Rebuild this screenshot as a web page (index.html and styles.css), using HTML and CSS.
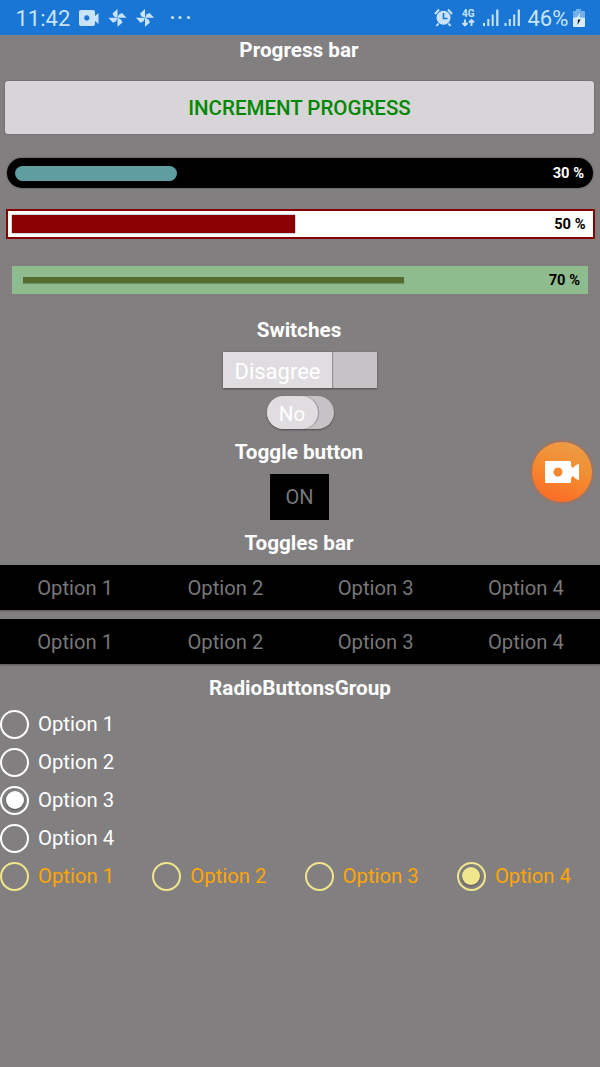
FILE: index.html
```html
<!DOCTYPE html>
<html lang="en">
<head>
<meta charset="utf-8">
<title>Widgets</title>
<link rel="stylesheet" href="styles.css">
</head>
<body>
<header class="status">
  <span class="time">11:42</span>
  <svg class="status-left" width="116" height="24" viewBox="0 0 116 24" fill="#c9e3fb">
    <path fill-rule="evenodd" d="M4 4h12q2 0 2 2v4l3.500-3v11L18 15v3q0 2-2 2H4q-2 0-2-2V6q0-2 2-2zM9.800 9.300a2.700 2.700 0 1 0 .01 0z"/>
    <g id="pinwheel"><path d="M40.500 11.800V3L35.500 7.500l1.500 3z"/><path d="M40.500 11.800h9L45 7l-3 1.500z"/><path d="M40.500 11.800v9L45.500 16.500l-1.500-3z"/><path d="M40.500 11.800h-9L36 16.800l3-1.500z"/></g>
    <use href="#pinwheel" x="27.500"/>
    <circle cx="95.500" cy="11.500" r="1.600"/><circle cx="103" cy="11.500" r="1.600"/><circle cx="111.500" cy="11.500" r="1.600"/>
  </svg>
  <svg class="status-right" width="91" height="24" viewBox="0 0 91 24" fill="#c9e3fb">
    <circle cx="11.500" cy="11.800" r="7"/>
    <path d="M3 8l4-4.500M20 8l-4-4.500M6.500 17.500l-2 2.500M16.500 17.500l2 2.500" stroke="#c9e3fb" stroke-width="2"/>
    <path d="M11.500 7v5.500h4" fill="none" stroke="#1976d5" stroke-width="1.600"/>
    <text class="network" x="30" y="10.500">4G</text>
    <path d="M33 13.500v6M30.500 17L33 19.500l2.500-2.500M39.500 20v-6M37 16.500l2.500-2.500 2.500 2.500" fill="none" stroke="#c9e3fb" stroke-width="1.900"/>
    <g id="signal"><path d="M51 17h2v3h-2zM55.300 13h2v7h-2zM59.700 8.500h2V20h-2zM64.200 3.500h2.200V20h-2.200z"/></g>
    <use href="#signal" x="21.500"/>
  </svg>
  <span class="percent">46%</span>
  <svg class="battery" width="14" height="20" viewBox="0 0 14 20">
    <path d="M4 1h5v2h3q1 0 1 1v7H1V4q0-1 1-1h2z" fill="#72b0ea"/>
    <path d="M1 10l4-1 8 1v8q0 1-1 1H2q-1 0-1-1z" fill="#d8ecfd"/>
    <path d="M8 5L3.500 11.500H6L5 17l5-7H7.500z" fill="#d8ecfd"/>
    <path d="M6 11.500h2.500L5.500 17z" fill="#111"/>
  </svg>
</header>
<main class="page">
  <h2 class="title">Progress bar</h2>
  <button class="increment">INCREMENT PROGRESS</button>
  <div class="progress progress-round"><div class="fill"></div><span class="value">30 %</span></div>
  <div class="progress progress-framed"><div class="fill"></div><span class="value">50 %</span></div>
  <div class="progress progress-thin"><div class="fill"></div><span class="value">70 %</span></div>
  <h2 class="title title-switches">Switches</h2>
  <div class="switch"><span class="thumb">Disagree</span></div>
  <div class="switch switch-round"><span class="thumb">No</span></div>
  <h2 class="title title-toggle">Toggle button</h2>
  <button class="toggle">ON</button>
  <h2 class="title title-bars">Toggles bar</h2>
  <div class="bar"><span>Option 1</span><span>Option 2</span><span>Option 3</span><span>Option 4</span></div>
  <div class="bar"><span>Option 1</span><span>Option 2</span><span>Option 3</span><span>Option 4</span></div>
  <h2 class="title title-radios">RadioButtonsGroup</h2>
  <div class="radios">
    <div class="radio"><i class="ring"></i>Option 1</div>
    <div class="radio"><i class="ring"></i>Option 2</div>
    <div class="radio"><i class="ring checked"></i>Option 3</div>
    <div class="radio"><i class="ring"></i>Option 4</div>
  </div>
  <div class="radios radios-row">
    <div class="radio"><i class="ring"></i>Option 1</div>
    <div class="radio"><i class="ring"></i>Option 2</div>
    <div class="radio"><i class="ring"></i>Option 3</div>
    <div class="radio"><i class="ring checked"></i>Option 4</div>
  </div>
</main>
<div class="recorder">
  <svg width="34" height="24" viewBox="0 0 34 24"><path fill="#fff" fill-rule="evenodd" d="M1 1h24q1 0 1 1v4l2 2 3-3 3-1v16l-3-1-3-3-2 2v4q0 1-1 1H1q-1 0-1-1V2q0-1 1-1zM13 7.500a4.500 4.500 0 1 0 .01 0z"/></svg>
</div>
</body>
</html>
```
FILE: styles.css
```css
* { box-sizing: border-box; }
body {
  margin: 0;
  height: 1067px;
  overflow: hidden;
  background: #827f81;
  color: #fff;
  font: 20.5px/24px Roboto, sans-serif;
}
.status {
  display: flex;
  height: 35px;
  padding: 6px 14px 0 15.5px;
  background: #1976d5;
  color: #c9e3fb;
  font-size: 22px;
}
.time { width: 61px; line-height: 26px; }
.status-left { flex: none; }
.status-right { flex: none; margin-left: 239px; }
.percent { flex: 1; padding-left: 5px; line-height: 26px; white-space: nowrap; }
.battery { flex: none; margin-top: 2px; }
.network { font: 700 10px Roboto, sans-serif; }
.page { display: flex; flex-direction: column; align-items: center; }
.title {
  height: 24px;
  margin: 3px 0 0 -2px;
  font-size: 20.7px;
  font-weight: 700;
  line-height: 24px;
}
.increment {
  width: 589px;
  height: 53px;
  margin: 19px 0 0 -1px;
  padding: 0;
  border: 0;
  border-radius: 3px;
  background: #d7d5d7;
  box-shadow: 0 0 2px rgba(0, 0, 0, .35);
  color: #008800;
  font: 500 20.5px/54px Roboto, sans-serif;
}
.progress {
  display: flex;
  align-items: center;
  justify-content: space-between;
  font-size: 14.7px;
  font-weight: 700;
}
.progress-round {
  width: 586px;
  height: 30px;
  margin: 24px 0 0;
  padding: 0 9px 0 8px;
  border-radius: 15px;
  background: #000;
  box-shadow: 0 0 2px rgba(0, 0, 0, .5);
}
.progress-round .fill { width: 162px; height: 15px; border-radius: 8px; background: #5f9ea0; }
.progress-framed {
  width: 589px;
  height: 30px;
  margin: 21px 0 0;
  padding: 0 7px 0 4px;
  border: 2px solid #870000;
  background: #fff;
  color: #000;
}
.progress-framed .fill { width: 283px; height: 18px; background: #8b0000; box-shadow: 0 0 1px #000; }
.progress-thin {
  width: 576px;
  height: 28px;
  margin-top: 27px;
  padding: 0 8px 0 11px;
  background: #8fbc8f;
  color: #000;
}
.progress-thin .fill { width: 381px; height: 6px; background: #556b2f; box-shadow: 0 1px 1px rgba(60, 90, 40, .4); }
.title-switches { margin-top: 24px; }
.switch {
  display: flex;
  width: 154px;
  height: 36px;
  margin-top: 10px;
  background: #c5c3c5;
  box-shadow: 0 1px 2px rgba(0, 0, 0, .4);
  font-size: 22px;
}
.thumb {
  width: 109px;
  background: #dfdde0;
  box-shadow: 1px 0 1px rgba(0, 0, 0, .25);
  line-height: 39px;
  text-align: center;
}
.switch-round { width: 67px; height: 33px; margin-top: 8px; border-radius: 17px; font-size: 20.5px; }
.switch-round .thumb { width: 51px; border-radius: 17px; line-height: 36px; }
.title-toggle { margin-top: 11px; }
.toggle {
  width: 59px;
  height: 46px;
  margin: 10px 0 0 -1px;
  padding: 0;
  border: 0;
  background: #000;
  color: #777;
  font: 20px/46px Roboto, sans-serif;
}
.title-bars { margin-top: 11px; }
.bar {
  display: grid;
  grid-template-columns: repeat(4, 1fr);
  width: 602px;
  height: 45px;
  margin: 10px 0 0;
  padding-left: 1px;
  background: #000;
  box-shadow: 0 1px 2px rgba(0, 0, 0, .35);
  color: #777;
  font-size: 20.2px;
  line-height: 46px;
  text-align: center;
}
.bar + .bar { margin-top: 8.5px; }
.title-radios { margin: 12.5px 0 0; }
.radios { width: 600px; margin-top: 5px; }
.radio { display: flex; align-items: center; height: 38px; font-size: 20.3px; }
.ring {
  display: grid;
  place-items: center;
  width: 29px;
  height: 29px;
  margin-right: 9px;
  border: 2px solid currentColor;
  border-radius: 50%;
}
.checked::after {
  content: "";
  width: 18px;
  height: 18px;
  border-radius: 50%;
  background: currentColor;
  box-shadow: 0 1px 2px rgba(0, 0, 0, .4);
}
.radios-row { display: flex; margin-top: 0; color: #ffa500; }
.radios-row .radio { flex: 0 0 152.3px; }
.radios-row .ring { color: #f0e68c; }
.recorder {
  position: absolute;
  left: 532px;
  top: 442px;
  display: grid;
  place-items: center;
  width: 60px;
  height: 60px;
  border-radius: 50%;
  background: linear-gradient(20deg, #fb6424, #f58a30 50%, #e9a04a);
  box-shadow: 0 0 3px 1px rgba(210, 100, 40, .65);
}
```
